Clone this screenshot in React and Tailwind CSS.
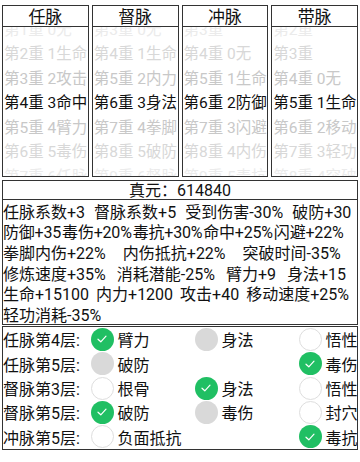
import React from "react";

const FONT = { fontFamily: 'Roboto, "Noto Sans CJK SC", "Noto Sans", sans-serif' };

const columns = [
  {
    title: "任脉",
    items: ["第1重 0无", "第2重 1生命", "第3重 2攻击", "第4重 3命中", "第5重 4臂力", "第6重 5毒伤", "第7重 6任脉"],
  },
  {
    title: "督脉",
    items: ["第3重 0无", "第4重 1生命", "第5重 2内力", "第6重 3身法", "第7重 4拳脚", "第8重 5破防", "第9重 6督脉"],
  },
  {
    title: "冲脉",
    items: ["第3重", "第4重 0无", "第5重 1生命", "第6重 2防御", "第7重 3闪避", "第8重 4内伤", "第9重 5毒抗"],
  },
  {
    title: "带脉",
    items: ["第2重", "第3重", "第4重 0无", "第5重 1生命", "第6重 2移动", "第7重 3轻功", "第8重 4突破"],
  },
];

const colorFor = (d) => {
  if (d === 0) return "text-[#111]";
  if (d === 1) return "text-[#c8c8c8]";
  if (d === 2) return "text-[#d8d8d8]";
  return "text-[#ebebeb]";
};

function Column({ title, items }) {
  return (
    <div className="border border-[#333] bg-white">
      <div className="h-[21px] border-b border-[#333] flex items-center justify-center pt-[2px] text-[17px] leading-none text-[#111]">
        {title}
      </div>
      <div className="h-[149px] overflow-hidden">
        <div className="-mt-[10px]">
          {items.map((t, i) => (
            <div
              key={i}
              className={`h-[24.5px] flex items-center pl-[1px] pt-[2px] text-[15.5px] leading-none whitespace-nowrap ${colorFor(Math.abs(i - 3))}`}
            >
              {t}
            </div>
          ))}
        </div>
      </div>
    </div>
  );
}

const stats = [
  { cls: "gap-x-[9px]", parts: ["任脉系数+3", "督脉系数+5", "受到伤害-30%", "破防+30"] },
  { cls: "gap-x-[1px] tracking-[-0.2px]", parts: ["防御+35", "毒伤+20%", "毒抗+30%", "命中+25%", "闪避+22%"] },
  { cls: "gap-x-[17px]", parts: ["拳脚内伤+22%", "内伤抵抗+22%", "突破时间-35%"] },
  { cls: "gap-x-[11px]", parts: ["修炼速度+35%", "消耗潜能-25%", "臂力+9", "身法+15"] },
  { cls: "gap-x-[7px]", parts: ["生命+15100", "内力+1200", "攻击+40", "移动速度+25%"] },
  { cls: "gap-x-[7px]", parts: ["轻功消耗-35%"] },
];

function Circle({ state }) {
  if (state === "on") {
    return (
      <div className="w-[23px] h-[23px] rounded-full bg-[#20bf63] flex items-center justify-center shrink-0">
        <svg width="10" height="8" viewBox="0 0 10 8" fill="none">
          <path d="M1 4.2 L3.8 6.8 L9 1.2" stroke="white" strokeWidth="1.2" strokeLinecap="round" strokeLinejoin="round" />
        </svg>
      </div>
    );
  }
  if (state === "gray") {
    return <div className="w-[23px] h-[23px] rounded-full bg-[#d9d9d9] shrink-0" />;
  }
  return <div className="w-[23px] h-[23px] rounded-full bg-white border border-[#dedede] shrink-0" />;
}

const rows = [
  { label: "任脉第4层:", opts: [["on", "臂力"], ["gray", "身法"], ["off", "悟性"]] },
  { label: "任脉第5层:", opts: [["gray", "破防"], null, ["on", "毒伤"]] },
  { label: "督脉第3层:", opts: [["off", "根骨"], ["on", "身法"], ["off", "悟性"]] },
  { label: "督脉第5层:", opts: [["on", "破防"], ["gray", "毒伤"], ["off", "封穴"]] },
  { label: "冲脉第5层:", opts: [["off", "负面抵抗"], null, ["on", "毒抗"]] },
];

export default function App() {
  return (
    <div className="w-[360px] h-[462px] bg-white overflow-hidden px-[2px] pt-[5px]" style={FONT}>
      <div className="grid grid-cols-4 gap-x-[3px]">
        {columns.map((c) => (
          <Column key={c.title} {...c} />
        ))}
      </div>

      <div className="mt-[3px] border border-[#333]">
        <div className="h-[19px] border-b border-[#333] flex items-center justify-center pt-[2px] text-[16px] leading-none text-[#111]">
          真元：614840
        </div>
        <div>
          {stats.map((s, i) => (
            <div
              key={i}
              className={`h-[20.6px] flex items-center pt-[5px] text-[16px] leading-none text-[#111] whitespace-nowrap ${s.cls}`}
            >
              {s.parts.map((p, j) => (
                <span key={j}>{p}</span>
              ))}
            </div>
          ))}
        </div>
      </div>

      <div className="mt-[1.5px] border border-[#333] overflow-hidden">
        {rows.map((r, i) => (
          <div key={i} className="h-[24.4px] flex items-center text-[16px] leading-none text-[#111]">
            <div className="w-[87.5px] shrink-0 whitespace-nowrap pt-[4px]">{r.label}</div>
            {r.opts.map((o, j) => (
              <div key={j} className="w-[104px] shrink-0 flex items-center gap-[4px] whitespace-nowrap">
                {o && (
                  <>
                    <Circle state={o[0]} />
                    <span className="pt-[4px]">{o[1]}</span>
                  </>
                )}
              </div>
            ))}
          </div>
        ))}
      </div>
    </div>
  );
}
